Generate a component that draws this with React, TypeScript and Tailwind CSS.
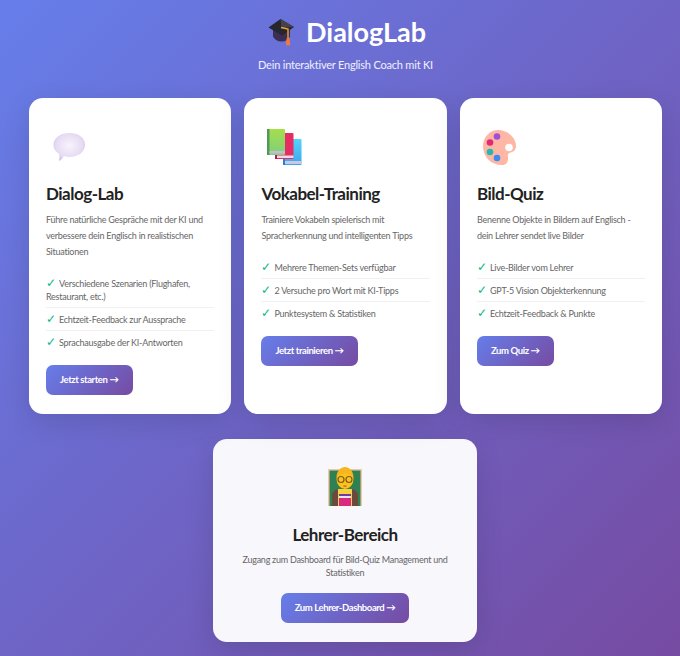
import React from "react"

const font = { fontFamily: '"Lato", "Noto Sans", sans-serif' }

const GradCap = () => (
  <svg width="27" height="28" viewBox="0 0 27 28">
    <path d="M5 12v6.500c2 3.500 4.500 5 8.500 5 4 0 6.500-1.500 8.500-5V12z" fill="#3c2d52" />
    <path d="M.5 9.500 12.500 1 26 9 14 17.500z" fill="#26262e" />
    <path d="M12.500 1 26 9 13.500 10z" fill="#45424e" />
    <path d="M13 9.500 20 11V20" fill="none" stroke="#f5a524" strokeWidth="1.400" />
    <path d="M18.700 20h2.600l1 6.500c-.3 1.300-4 1.300-4.400 0z" fill="#ee7b3c" />
  </svg>
)

const Bubble = () => (
  <svg width="34" height="32" viewBox="0 0 34 32">
    <defs>
      <radialGradient id="bub" cx="50%" cy="45%" r="60%">
        <stop offset="0%" stopColor="#f8f3fc" />
        <stop offset="72%" stopColor="#e6dbf3" />
        <stop offset="100%" stopColor="#c9b8e2" />
      </radialGradient>
    </defs>
    <path d="M17.500 2C26 2 33 6.500 33 14 33 21 26 26 18 26 15.500 26 14 25.700 12 25 11 27 8.500 29.500 7 30 7.500 28 7.500 25 7 23 3.500 20.500 1.500 17.500 1.500 14 1.500 6.500 9 2 17.500 2z" fill="url(#bub)" />
  </svg>
)

const Books = () => (
  <svg width="35" height="37" viewBox="0 0 35 37">
    <defs>
      <linearGradient id="bg" x1="0" y1="0" x2="0" y2="1">
        <stop offset="0%" stopColor="#a6de4a" />
        <stop offset="100%" stopColor="#7fd07e" />
      </linearGradient>
      <linearGradient id="bb" x1="0" y1="0" x2="0" y2="1">
        <stop offset="0%" stopColor="#55d4fa" />
        <stop offset="100%" stopColor="#3aa6ee" />
      </linearGradient>
    </defs>
    <rect x="16" y="10" width="18.500" height="26" rx="1" fill="url(#bb)" />
    <rect x="16" y="10" width="2" height="26" fill="#2f7ed0" />
    <rect x="18" y="32" width="16.500" height="3" fill="#cfc6e2" />
    <rect x="8" y="4" width="18.500" height="26" rx="1" fill="#e62c62" />
    <rect x="8" y="4" width="2" height="26" fill="#a81e58" />
    <rect x="10" y="26.500" width="16.500" height="2.500" fill="#f3d9e2" />
    <rect x="0" y="0" width="18" height="26" rx="1" fill="url(#bg)" />
    <rect x="0" y="0" width="2.500" height="26" fill="#4f9a58" />
    <rect x="2.500" y="22" width="15.500" height="2.500" fill="#c3bcd6" />
  </svg>
)

const Palette = () => (
  <svg width="35" height="35" viewBox="0 0 35 35">
    <path d="M15 0C24 0 33 7 33 16 33 21 29.500 22 27.500 22.500 25 23 24.500 25 25 27 25.500 31 24 35 19 35 8 35 0 27 0 16 0 7 7 0 15 0z" fill="#fdb7a4" />
    <circle cx="26" cy="17.500" r="3.800" fill="#ffffff" />
    <circle cx="14" cy="6.500" r="3.300" fill="#a24fd8" />
    <circle cx="7" cy="12.500" r="3.300" fill="#e02a78" />
    <circle cx="7" cy="22" r="3.300" fill="#25b8ae" />
    <circle cx="14" cy="28" r="3.300" fill="#3d8bf0" />
  </svg>
)

const Teacher = () => (
  <svg width="34" height="39" viewBox="0 0 34 39">
    <rect x="0" y="2" width="34" height="37" fill="#f0c8a8" />
    <rect x="1.500" y="3.500" width="31" height="35.500" fill="#2f8052" />
    <path d="M4 39V29c0-4 3-7 7-7h12c4 0 7 3 7 7v10z" fill="#6b4a3c" />
    <rect x="10" y="22" width="14" height="17" fill="#f8d040" />
    <rect x="11" y="27" width="12" height="2" fill="#6b3fa0" />
    <rect x="11" y="29" width="12" height="2" fill="#ece4ec" />
    <rect x="11" y="31" width="12" height="8" fill="#d82a80" />
    <ellipse cx="17" cy="12" rx="8.500" ry="10" fill="#fcc21b" />
    <path d="M8.500 11C8.500 3.500 13 0 17 0 21 0 25.500 3.500 25.500 11 23.500 7.500 20 6.500 17 6.500 14 6.500 10.500 7.500 8.500 11z" fill="#f7b51f" />
    <circle cx="13" cy="12.500" r="3" fill="none" stroke="#7b5a1c" strokeWidth="1.200" />
    <circle cx="21" cy="12.500" r="3" fill="none" stroke="#7b5a1c" strokeWidth="1.200" />
    <rect x="15.500" y="18.500" width="3" height="1.200" fill="#c8503c" />
  </svg>
)

const Feature = ({ text }: { text: string }) => (
  <li className="border-b border-[#f1f1f3] py-[4.500px] text-[9px] leading-[13px] tracking-[-0.25px] text-[#666666] last:border-b-0">
    <span className="inline-block w-[13px] text-[12px] leading-none text-[#10b981]">✓</span>
    {text}
  </li>
)

const CTA = ({ label }: { label: string }) => (
  <button
    type="button"
    className="h-[30px] rounded-[7px] bg-[linear-gradient(135deg,#667eea_0%,#764ba2_100%)] px-[14px] text-[9.500px] font-bold tracking-[-0.4px] text-white"
  >
    {label}
  </button>
)

type CardProps = {
  icon: React.ReactNode
  title: string
  text: string
  features: string[]
  button: string
}

const Card = ({ icon, title, text, features, button }: CardProps) => (
  <div className="flex flex-col items-start rounded-[14px] bg-white px-[17px] pt-[30px] pb-[19px] shadow-[0_8px_28px_rgba(0,0,0,0.12)]">
    <div className="flex h-[38px] items-center pl-[6px]">{icon}</div>
    <h2 className="mt-[16px] text-[17px] leading-[24px] font-bold tracking-[-0.5px] text-[#222222]">{title}</h2>
    <p className="mt-[6px] text-[9px] leading-[16px] tracking-[-0.25px] text-[#666666]">{text}</p>
    <ul className="mt-[12px] mb-[12px] w-full">
      {features.map((f) => (
        <Feature key={f} text={f} />
      ))}
    </ul>
    <CTA label={button} />
  </div>
)

export default function App() {
  return (
    <div
      style={font}
      className="h-[656px] overflow-hidden bg-[linear-gradient(135deg,#667eea_0%,#764ba2_100%)] pt-[13px] pr-[18px] pl-[29px]"
    >
      <div className="flex items-center justify-center gap-[11px] pl-[3px]">
        <GradCap />
        <h1 className="text-[27px] leading-[37px] font-bold text-white">DialogLab</h1>
      </div>
      <p className="mt-[7px] text-center text-[11px] leading-[16px] tracking-[-0.2px] text-white/90">Dein interaktiver English Coach mit KI</p>

      <div className="mt-[25px] grid grid-cols-3 gap-[13.400px]">
        <Card
          icon={<Bubble />}
          title="Dialog-Lab"
          text="Führe natürliche Gespräche mit der KI und verbessere dein Englisch in realistischen Situationen"
          features={["Verschiedene Szenarien (Flughafen, Restaurant, etc.)", "Echtzeit-Feedback zur Aussprache", "Sprachausgabe der KI-Antworten"]}
          button="Jetzt starten →"
        />
        <Card
          icon={<Books />}
          title="Vokabel-Training"
          text="Trainiere Vokabeln spielerisch mit Spracherkennung und intelligenten Tipps"
          features={["Mehrere Themen-Sets verfügbar", "2 Versuche pro Wort mit KI-Tipps", "Punktesystem & Statistiken"]}
          button="Jetzt trainieren →"
        />
        <Card
          icon={<Palette />}
          title="Bild-Quiz"
          text="Benenne Objekte in Bildern auf Englisch - dein Lehrer sendet live Bilder"
          features={["Live-Bilder vom Lehrer", "GPT-5 Vision Objekterkennung", "Echtzeit-Feedback & Punkte"]}
          button="Zum Quiz →"
        />
      </div>

      <div className="mt-[25px] ml-[184px] flex w-[264px] flex-col items-center rounded-[14px] bg-[#f8f7fc] px-[17px] pt-[28px] pb-[19px] text-center shadow-[0_8px_28px_rgba(0,0,0,0.12)]">
        <Teacher />
        <h2 className="mt-[17px] text-[17px] leading-[24px] font-bold tracking-[-0.5px] text-[#222222]">Lehrer-Bereich</h2>
        <p className="mt-[5.500px] text-[9px] leading-[13px] tracking-[-0.25px] text-[#666666]">
          Zugang zum Dashboard für Bild-Quiz Management und Statistiken
        </p>
        <div className="mt-[14px]">
          <CTA label="Zum Lehrer-Dashboard →" />
        </div>
      </div>
    </div>
  )
}
